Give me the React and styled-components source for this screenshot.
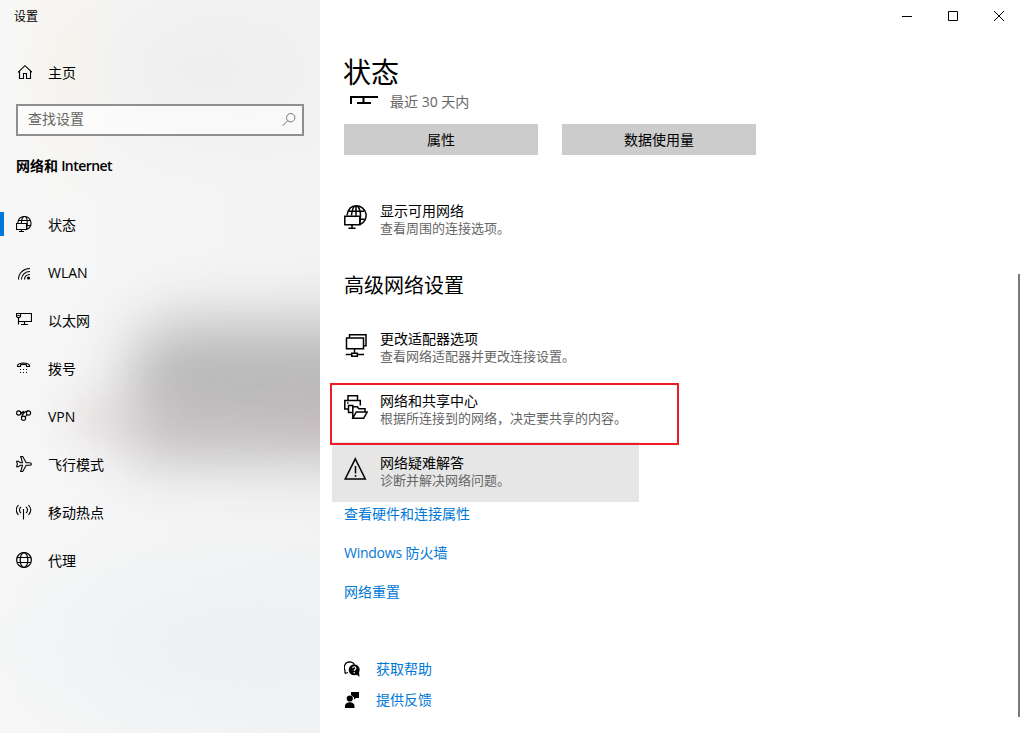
import React from 'react';
import styled, { createGlobalStyle } from 'styled-components';

const GlobalStyle = createGlobalStyle`
  * {
    box-sizing: border-box;
  }
  body {
    margin: 0;
    overflow: hidden;
    background: #fff;
    color: #000;
    font-family: 'Open Sans', 'Noto Sans CJK SC', sans-serif;
    font-size: 14px;
  }
`;

const Window = styled.div`
  display: grid;
  grid-template-columns: 320px 1fr;
  width: 1022px;
  height: 733px;
  overflow: hidden;
`;

const Sidebar = styled.aside`
  display: grid;
  grid-template: 733px / 320px;
  overflow: hidden;
`;

/* acrylic effect: wallpaper bleeding through the panel */
const Acrylic = styled.div`
  grid-area: 1 / 1;
  overflow: hidden;
  background: radial-gradient(
      ellipse 60px 160px at 65px 60px,
      rgba(250, 242, 225, 0.35),
      transparent
    ),
    radial-gradient(
      ellipse 180px 120px at 200px 70px,
      rgba(230, 231, 232, 0.45),
      transparent
    ),
    radial-gradient(
      ellipse 300px 130px at 230px 645px,
      rgba(232, 238, 243, 0.6),
      transparent
    ),
    linear-gradient(90deg, #f7f7f7, #f3f3f3);
`;

const Shade = styled.div`
  width: 340px;
  height: 145px;
  margin: 320px 0 0 130px;
  border-radius: 50px 0 0 10px;
  background: linear-gradient(
    #bebebe,
    #b9b8b8 50%,
    #bdb9ba 75%,
    #cac7c9 90%,
    #dad8da
  );
  filter: blur(29px);
`;

const Blush = styled.div`
  width: 340px;
  height: 40px;
  margin: -66px 0 0 70px;
  background: linear-gradient(
    90deg,
    rgba(218, 202, 202, 0.55),
    rgba(200, 196, 202, 0.25) 50%,
    rgba(202, 182, 184, 0.35) 75%
  );
  filter: blur(20px);
`;

const SidebarContent = styled.div`
  grid-area: 1 / 1;
  z-index: 1;
  display: flex;
  flex-direction: column;
`;

const AppTitle = styled.div`
  height: 32px;
  padding: 1px 0 0 14px;
  font-size: 12px;
  line-height: 32px;
`;

const HomeLink = styled.div`
  display: flex;
  align-items: center;
  gap: 16px;
  height: 40px;
  margin-top: 20px;
  padding-left: 16px;
`;

const SearchBox = styled.div`
  display: flex;
  align-items: center;
  justify-content: space-between;
  width: 288px;
  height: 32px;
  margin: 12px 0 0 16px;
  padding: 0 5px 2px 10px;
  border: 2px solid #8f8f8f;
  background: rgba(255, 255, 255, 0.6);
  color: #666;
  line-height: 26px;
`;

const Category = styled.div`
  margin: 20px 0 0 16px;
  font-weight: 600;
  line-height: 20px;
  word-spacing: -0.5px;
`;

const Tight = styled.span`
  letter-spacing: ${(props) => props.$by}px;
`;

const Nav = styled.nav`
  margin-top: 24px;
`;

const NavItem = styled.div`
  display: flex;
  align-items: center;
  height: 48px;
`;

const Marker = styled.span`
  width: 4px;
  height: 24px;
  margin-right: 12px;
  background: ${(props) => (props.$active ? '#0078d7' : 'transparent')};
`;

const NavLabel = styled.span`
  margin-left: 16px;
  padding-top: 2px;
  line-height: 20px;
`;

const Main = styled.main`
  display: flex;
  flex-direction: column;
`;

const TitleBar = styled.div`
  display: flex;
  justify-content: flex-end;
  height: 32px;
`;

const Control = styled.button`
  display: flex;
  align-items: center;
  justify-content: center;
  width: 46px;
  height: 32px;
  padding: 0;
  border: 0;
  background: none;
`;

const Body = styled.div`
  display: flex;
  flex: 1;
  justify-content: space-between;
`;

const Page = styled.div`
  width: 440px;
  padding: 20px 0 0 24px;
`;

const ScrollThumb = styled.div`
  width: 2px;
  height: 443px;
  margin: 242px 2px 0 0;
  background: #7a7a7a;
`;

const PageTitle = styled.h1`
  margin: 0 0 0 -1px;
  font-size: 28px;
  font-weight: 400;
  line-height: 40px;
`;

const Usage = styled.div`
  display: flex;
  height: 20px;
  padding-left: 6px;
  gap: 12px;
  color: #666;
  line-height: 20px;
`;

const Buttons = styled.div`
  display: flex;
  gap: 24px;
  margin: 12px 0 35px;
`;

const Button = styled.button`
  width: 194px;
  height: 31px;
  padding: 0 0 2px;
  border: 0;
  background: #ccc;
  font: inherit;
`;

const Section = styled.h2`
  margin: 22px 0 18px;
  font-size: 20px;
  font-weight: 400;
  line-height: 28px;
`;

const Option = styled.div`
  position: relative;
  display: flex;
  gap: 12px;
  width: 307px;
  height: 60px;
  margin: 0 0 2px -12px;
  padding: 12px 0 0 12px;
  background: ${(props) => (props.$hovered ? '#e6e6e6' : 'transparent')};
  white-space: nowrap;
`;

const OptionIcon = styled.span`
  height: 24px;
  margin-top: 3px;
`;

const OptionTitle = styled.div`
  line-height: 18px;
`;

const OptionText = styled.div`
  color: #666;
  font-size: 13px;
  line-height: 17px;
`;

/* red frame laid over the option and its neighbour */
const Highlight = styled.div`
  position: absolute;
  z-index: 1;
  top: 3px;
  left: -2px;
  width: 349px;
  height: 62px;
  border: 2px solid #ed1c24;
`;

const Links = styled.div`
  display: flex;
  flex-direction: column;
  align-items: flex-start;
  gap: 19px;
`;

const Link = styled.a`
  color: #0078d7;
  line-height: 20px;
`;

const Support = styled.div`
  display: flex;
  flex-direction: column;
  gap: 11px;
  margin-top: 57px;
`;

const SupportRow = styled.div`
  display: flex;
  align-items: center;
  gap: 16px;
  height: 20px;
`;

const Svg = styled.svg`
  display: block;
  flex: none;
`;

const Icon = ({ w = 16, h = w, stroke = 1, children }) => (
  <Svg
    width={w}
    height={h}
    viewBox={`0 0 ${w} ${h}`}
    fill="none"
    stroke="#000"
    strokeWidth={stroke}
  >
    {children}
  </Svg>
);

const HomeIcon = () => (
  <Icon>
    <path d="M2 8.3 9 1.7l7 6.6M3.5 7v7.5h4v-5h3v5h4V7" strokeWidth="1.1" />
  </Icon>
);

const StatusIcon = () => (
  <Icon>
    <g strokeWidth="1.1">
      <path d="M1.8 7C2.3 3 5 .5 8.3.5a6.7 6.7 0 0 1 2.7 12.800M5.3 7C5.700 3 6.8.5 8.3.5c2 0 3 3.500 3 6.500s-.3 4.500-.8 6M2.500 4.500h12M11 9.500h3.500" />
      <path d="M.5 7.500h10v6H.5zM5.500 13.500v2M3 15.500h5" />
    </g>
  </Icon>
);

const WlanIcon = () => (
  <Icon>
    <path
      d="M2.5 15.5C2.5 9 7.5 4.5 14 4.5M5.5 15.5C5.5 11 9 7.5 14 7.5M8.5 15.5c0-3 2-5 5.5-5"
      strokeWidth="1.1"
    />
    <circle cx="12.5" cy="14" r="1.6" fill="#000" stroke="none" />
  </Icon>
);

const EthernetIcon = () => (
  <Icon>
    <path
      d="M5 1.5h10.5v8h-13v3M8.5 9.5v3M5 12.5h7M.5 1.5h4v3l-1 1h-2l-1-1zM2.5 5.5v4M1.5 3.5h2"
      strokeWidth="1.2"
    />
  </Icon>
);

const DialIcon = () => (
  <Icon>
    <path
      d="M1.5 6.5V5.5C3 2.2 12 2.2 13.5 5.5v1h-3v-1.7c-2-.6-4-.6-6 0v1.7z"
      strokeWidth="1.1"
    />
    <path
      d="M4 9.5h1m2 0h1m2 0h1M4 12.5h1m2 0h1m2 0h1"
      strokeWidth="1.2"
    />
  </Icon>
);

const VpnIcon = () => (
  <Icon>
    <g strokeWidth="1.1">
      <circle cx="2.7" cy="5" r="2.1" />
      <circle cx="12.5" cy="5" r="2.1" />
      <circle cx="7.5" cy="10.2" r="2.1" />
      <path d="M4.3 6.500 7.200 3.500 8.800 4.500M12 3C9 2.800 6 6.500 5.500 9.500M9.300 9 11 6.500M4.500 3.800 6.500 6" />
    </g>
  </Icon>
);

const PlaneIcon = () => (
  <Icon>
    <path
      d="M.6 5.3h2l1.7 1.400H6.500L4.700.5h2L10.200 6.700h3.300c2.600 0 2.600 2.600 0 2.600H10.200L6.700 15.500h-2l1.800-6.200H4.300l-1.700 1.400h-2l.8-2.700z"
      strokeWidth="1.1"
    />
  </Icon>
);

const HotspotIcon = () => (
  <Icon>
    <path
      d="M7.5 5v10.5M5 3c-2 1.5-2 4.5 0 6M10 3c2 1.5 2 4.5 0 6M2.5 1c-2.7 3-2.7 7 0 10M12.5 1c2.7 3 2.7 7 0 10"
      strokeWidth="1.1"
    />
  </Icon>
);

const ProxyIcon = () => (
  <Icon>
    <g strokeWidth="1.2">
      <circle cx="8" cy="8" r="7.4" />
      <ellipse cx="8" cy="8" rx="3.8" ry="7.4" />
      <path d="M1 5.5h14M1 10.5h14" />
    </g>
  </Icon>
);

const SearchIcon = () => (
  <Icon>
    <g stroke="#777">
      <circle cx="9.7" cy="6.7" r="4.2" />
      <path d="M6.7 9.7 1.5 15" />
    </g>
  </Icon>
);

/* bottom edge of the usage monitor, the rest is scrolled away */
const MonitorEdge = () => (
  <Icon w={28} h={12} stroke={2}>
    <path d="M28 5H1v7M13.5 5v6M7 11h14" />
  </Icon>
);

const NetworksIcon = () => (
  <Icon w={24} stroke={1.5}>
    <path d="M3 10.5C4 4.5 7.5.8 12 .8a9.700 9.700 0 0 1 4 18.700M7.500 10.500c.5-5 2-9.700 4.500-9.700 3 0 4.500 5 4.500 9.700 0 4-.3 6.500-1 8.500M4 6.200h16M12 .8v10M16 14.200h5.500" />
    <path d="M.8 11.200h15v8.600H.8zM8 19.800v3.500M4.500 23.200h7" />
  </Icon>
);

const AdapterIcon = () => (
  <Icon w={24} stroke={1.5}>
    <path d="M5.5 4.5V1.8h16.5v11h-2.5M2.5 5h17v10.8h-17zM10.500 16v4M1.800 21.500H7.500M13.500 21.500h6.500M7.800 20.200h5.500v3H7.800z" />
  </Icon>
);

const SharingIcon = () => (
  <Icon w={24} stroke={1.5}>
    <path d="M4 5.5V.8h9.5v4.700M4.500 14H.8V5.500h15.500v5M8 17.500H4.500v-7h5" />
    <path d="M8.800 23V11.800h4.500l1.500 2H21v3M8.800 23.200 12.300 17h10.900l-3.500 6.200z" />
    <path d="M3 8h1.500" />
  </Icon>
);

const WarningIcon = () => (
  <Icon w={24} stroke={1.5}>
    <path d="M11.3 1.8 21.3 22H1.2z" />
    <path d="M11.5 9v7.5M11.5 18v1.7" />
  </Icon>
);

const HelpIcon = () => (
  <Icon>
    <path
      d="M1 12.5V9.5C-.5 6 .5 1 5.5.8c2.500 0 4 1 5 2.700M1 12.500l3-1"
      strokeWidth="1.2"
    />
    <circle cx="10.2" cy="8.8" r="5.5" fill="#000" stroke="none" />
    <path d="m12 13 3.500 3-.5-5z" fill="#000" stroke="none" />
    <path
      d="M8.6 7.2c.3-2 3.300-1.800 3.200 0 0 1.300-1.600 1.300-1.600 2.800M10.200 11v1.200"
      stroke="#fff"
      strokeWidth="1.2"
    />
  </Icon>
);

const FeedbackIcon = () => (
  <Icon>
    <g fill="#000" stroke="none">
      <circle cx="5.8" cy="6.5" r="3.1" />
      <path d="M1 16v-2c0-5 9.5-5 9.5 0v2zM7 0h8v6h-3l-2 1.5V5.5L7 3z" />
    </g>
  </Icon>
);

const navItems = [
  { label: '状态', icon: StatusIcon, active: true },
  { label: 'WLAN', icon: WlanIcon },
  { label: '以太网', icon: EthernetIcon },
  { label: '拨号', icon: DialIcon },
  { label: 'VPN', icon: VpnIcon },
  { label: '飞行模式', icon: PlaneIcon },
  { label: '移动热点', icon: HotspotIcon },
  { label: '代理', icon: ProxyIcon },
];

const NetworkOption = ({ icon: OptionSvg, title, text, hovered, marked }) => (
  <Option $hovered={hovered}>
    <OptionIcon>
      <OptionSvg />
    </OptionIcon>
    <div>
      <OptionTitle>{title}</OptionTitle>
      <OptionText>{text}</OptionText>
    </div>
    {marked && <Highlight />}
  </Option>
);

const App = () => {
  return (
    <>
      <GlobalStyle />
      <Window>
        <Sidebar>
          <Acrylic>
            <Shade />
            <Blush />
          </Acrylic>
          <SidebarContent>
            <AppTitle>设置</AppTitle>
            <HomeLink>
              <HomeIcon />
              主页
            </HomeLink>
            <SearchBox>
              查找设置
              <SearchIcon />
            </SearchBox>
            <Category>
              网络和 <Tight $by={-0.55}>Internet</Tight>
            </Category>
            <Nav>
              {navItems.map(({ label, icon: NavIcon, active }) => (
                <NavItem key={label}>
                  <Marker $active={active} />
                  <NavIcon />
                  <NavLabel>{label}</NavLabel>
                </NavItem>
              ))}
            </Nav>
          </SidebarContent>
        </Sidebar>
        <Main>
          <TitleBar>
            <Control>
              <Icon w={10}>
                <path d="M0 5.5h10" />
              </Icon>
            </Control>
            <Control>
              <Icon w={10}>
                <path d="M.5.5h9v9h-9z" />
              </Icon>
            </Control>
            <Control>
              <Icon w={10}>
                <path d="m0 0 10 10M10 0 0 10" />
              </Icon>
            </Control>
          </TitleBar>
          <Body>
            <Page>
              <PageTitle>状态</PageTitle>
              <Usage>
                <MonitorEdge />
                最近 30 天内
              </Usage>
              <Buttons>
                <Button>属性</Button>
                <Button>数据使用量</Button>
              </Buttons>
              <NetworkOption
                icon={NetworksIcon}
                title="显示可用网络"
                text="查看周围的连接选项。"
              />
              <Section>高级网络设置</Section>
              <NetworkOption
                icon={AdapterIcon}
                title="更改适配器选项"
                text="查看网络适配器并更改连接设置。"
              />
              <NetworkOption
                icon={SharingIcon}
                title="网络和共享中心"
                text="根据所连接到的网络，决定要共享的内容。"
                marked
              />
              <NetworkOption
                icon={WarningIcon}
                title="网络疑难解答"
                text="诊断并解决网络问题。"
                hovered
              />
              <Links>
                <Link>查看硬件和连接属性</Link>
                <Link>
                  <Tight $by={-0.25}>Windows</Tight> 防火墙
                </Link>
                <Link>网络重置</Link>
              </Links>
              <Support>
                <SupportRow>
                  <HelpIcon />
                  <Link>获取帮助</Link>
                </SupportRow>
                <SupportRow>
                  <FeedbackIcon />
                  <Link>提供反馈</Link>
                </SupportRow>
              </Support>
            </Page>
            <ScrollThumb />
          </Body>
        </Main>
      </Window>
    </>
  );
};

export default App;
